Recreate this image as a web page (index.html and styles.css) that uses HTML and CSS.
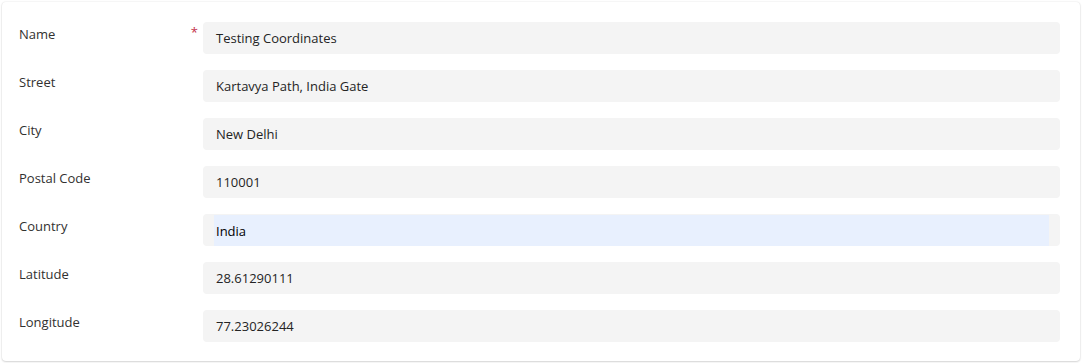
FILE: index.html
```html
<!DOCTYPE html>
<html lang="en">
<head>
  <meta charset="UTF-8">
  <link rel="stylesheet" href="styles.css">
</head>
<body>
  <div class="card">
    <div class="row">
      <label class="label required">Name</label>
      <div class="field"><span class="value">Testing Coordinates</span></div>
    </div>
    <div class="row">
      <label class="label">Street</label>
      <div class="field"><span class="value">Kartavya Path, India Gate</span></div>
    </div>
    <div class="row">
      <label class="label">City</label>
      <div class="field"><span class="value">New Delhi</span></div>
    </div>
    <div class="row">
      <label class="label">Postal Code</label>
      <div class="field"><span class="value">110001</span></div>
    </div>
    <div class="row">
      <label class="label">Country</label>
      <div class="field"><span class="value autofill">India</span></div>
    </div>
    <div class="row">
      <label class="label">Latitude</label>
      <div class="field"><span class="value">28.61290111</span></div>
    </div>
    <div class="row">
      <label class="label">Longitude</label>
      <div class="field"><span class="value">77.23026244</span></div>
    </div>
  </div>
</body>
</html>
```
FILE: styles.css
```css
body {
  margin: 0;
  padding: 2px 3px 2px 2px;
  font-family: "Open Sans", "Noto Sans", sans-serif;
  font-size: 13px;
  color: #323130;
  background: #fff;
}
.card {
  background: #fff;
  border-radius: 4px;
  box-shadow: 0 0 2px rgba(0, 0, 0, 0.12), 0 1px 2px rgba(0, 0, 0, 0.14);
  padding: 20px 20px 19px 16px;
  display: flex;
  flex-direction: column;
  gap: 16px;
}
.row {
  display: flex;
  align-items: flex-start;
}
.label {
  width: 185px;
  flex: none;
  position: relative;
  padding: 2px 0 0 1px;
  line-height: 20px;
  box-sizing: border-box;
}
.required::after {
  content: "*";
  color: #c4314b;
  position: absolute;
  right: 5px;
  top: 1px;
  line-height: 18px;
}
.field {
  flex: 1;
  height: 32px;
  background: #f4f4f4;
  border-radius: 4px;
  padding: 0 11px;
  display: flex;
  align-items: center;
}
.value {
  padding: 1px 0 0 2px;
  line-height: 31px;
  flex: 1;
  color: #242424;
}
.autofill {
  background: #e8f0fe;
  color: #000;
  height: 31px;
  line-height: 30px;
  box-sizing: border-box;
}
```
